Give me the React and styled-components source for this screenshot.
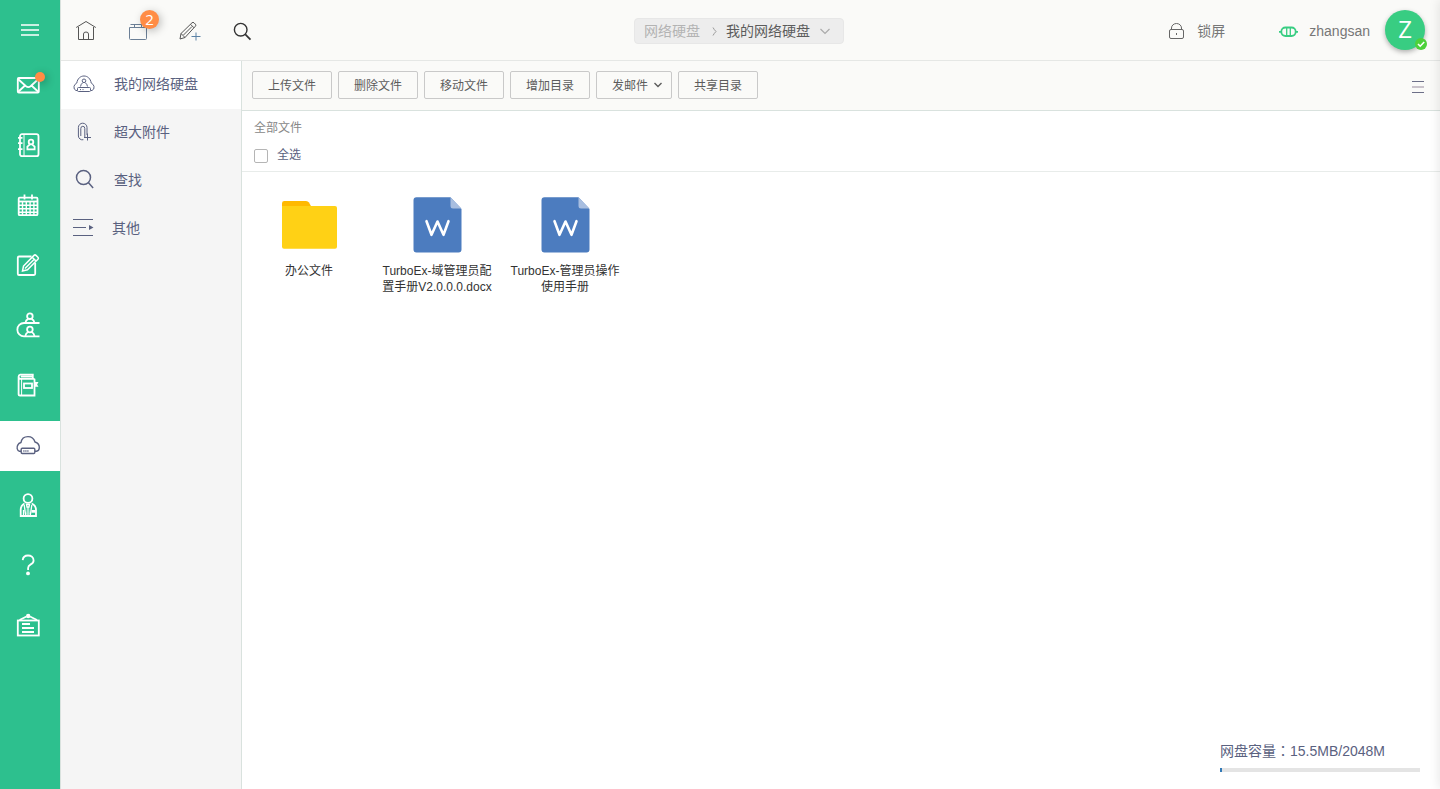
import React from 'react';
import styled, { createGlobalStyle, ThemeProvider } from 'styled-components';

const theme = {
  colors: {
    green: '#2dc08e',
    orange: '#ff8c45',
    bar: '#fafaf8',
    side: '#f5f5f5',
    line: '#d9e2de',
    ink: '#5a6180',
    text: '#5c5c5c',
  },
};

const GlobalStyle = createGlobalStyle`
  * {
    box-sizing: border-box;
  }

  body {
    margin: 0;
    overflow: hidden;
    background: #fff;
    color: #555;
    font-family: 'Liberation Sans', 'Noto Sans CJK SC', sans-serif;
    font-size: 14px;
  }

  button {
    font-family: inherit;
  }
`;

const Page = styled.div`
  display: flex;
  height: 789px;
  position: relative;
  overflow: hidden;
`;

const EdgeShadow = styled.div`
  position: absolute;
  top: 0;
  right: -10px;
  width: 10px;
  height: 100%;
  box-shadow: 0 0 12px rgba(0, 0, 0, 0.12);
  pointer-events: none;
`;

const Icon = styled.svg.attrs(props => ({
  viewBox: `0 0 ${props.$w || 24} ${props.$h || 24}`,
  width: props.$w || 24,
  height: props.$h || 24,
}))`
  display: block;
  flex: none;
  fill: none;
  overflow: visible;
  stroke: ${props => props.$color || 'currentColor'};
  stroke-width: ${props => props.$stroke || 1};

  .solid {
    fill: ${props => props.$color || 'currentColor'};
    stroke: none;
  }
`;

const Rail = styled.nav`
  width: 60px;
  flex: none;
  background: ${props => props.theme.colors.green};
  display: flex;
  flex-direction: column;
  gap: 10px;
`;

const RailToggle = styled.div`
  height: 51px;
  padding: 18px 0 0 18px;
  color: #fff;
`;

const RailItem = styled.div`
  position: relative;
  height: 50px;
  padding: 12px 0 0 16px;
  color: ${props => (props.$active ? props.theme.colors.ink : '#fff')};
  background: ${props => (props.$active ? '#fff' : 'transparent')};
`;

const Dot = styled.span`
  position: absolute;
  left: 35px;
  top: 11px;
  width: 10px;
  height: 10px;
  border-radius: 50%;
  background: ${props => props.theme.colors.orange};
  box-shadow: 2px 2px 8px rgba(0, 0, 0, 0.3);
`;

const Main = styled.div`
  flex: 1;
  min-width: 0;
  display: flex;
  flex-direction: column;
  border-left: 1px solid ${props => props.theme.colors.line};
`;

const Header = styled.header`
  height: 61px;
  flex: none;
  display: grid;
  grid-template-columns: 573px 210px 1fr;
  background: ${props => props.theme.colors.bar};
  border-bottom: 1px solid #e5e7e5;
`;

const HeaderTools = styled.div`
  display: flex;
  gap: 28px;
  padding: 19px 0 0 13px;
`;

const Tool = styled.span`
  position: relative;
  width: 24px;
  height: 24px;
  color: ${props => props.$color || '#555'};
`;

const Badge = styled.span`
  position: absolute;
  left: 14px;
  top: -9px;
  width: 19px;
  height: 19px;
  border-radius: 50%;
  background: ${props => props.theme.colors.orange};
  color: #fff;
  font: 400 15px/19px 'Open Sans', sans-serif;
  text-align: center;
  box-shadow: 2px 2px 8px rgba(0, 0, 0, 0.25);
`;

const Crumbs = styled.div`
  display: flex;
  align-items: center;
  height: 26px;
  margin-top: 18px;
  padding-left: 9px;
  border: 1px solid #e7e7e7;
  border-radius: 4px;
  background: #ededed;
  color: ${props => props.theme.colors.text};
  line-height: 24px;
  white-space: nowrap;

  .parent {
    width: 67px;
    color: #b3b3b3;
  }

  .current {
    width: 94px;
    padding-left: 1px;
  }
`;

const Account = styled.div`
  display: flex;
  justify-content: flex-end;
  padding: 10px 15px 0 0;
  line-height: 42px;
  color: #777;

  .lock {
    margin: 12px 12px 0 0;
  }

  .link {
    margin: 15px 11px 0 53px;
  }
`;

const Avatar = styled.div`
  position: relative;
  width: 40px;
  height: 40px;
  margin-left: 15px;
  border-radius: 50%;
  background: #38cd82;
  color: #fff;
  font: 400 24px/38px 'Open Sans', sans-serif;
  text-align: center;
  box-shadow: 0 2px 5px rgba(0, 0, 0, 0.3);
`;

const Status = styled.span`
  position: absolute;
  left: 30px;
  top: 28px;
  width: 12px;
  height: 12px;
  border-radius: 50%;
  background: #4dd13b;
`;

const Body = styled.div`
  flex: 1;
  display: flex;
`;

const Sidebar = styled.aside`
  width: 181px;
  flex: none;
  background: ${props => props.theme.colors.side};
  border-right: 1px solid ${props => props.theme.colors.line};
`;

const SideItem = styled.div`
  display: flex;
  align-items: center;
  gap: ${props => props.$gap || 18}px;
  height: 48px;
  padding: 0 0 2px 11px;
  color: ${props => props.theme.colors.ink};
  background: ${props => (props.$active ? '#fff' : 'transparent')};

  span {
    padding-bottom: 2px;
  }
`;

const Content = styled.main`
  flex: 1;
  display: flex;
  flex-direction: column;
`;

const Toolbar = styled.div`
  display: flex;
  gap: 6px;
  height: 50px;
  padding: 10px 15px 0 10px;
  background: ${props => props.theme.colors.bar};
  border-bottom: 1px solid ${props => props.theme.colors.line};
`;

const ToolButton = styled.button`
  display: flex;
  align-items: center;
  justify-content: center;
  gap: 5px;
  width: ${props => (props.$menu ? 76 : 80)}px;
  height: 28px;
  padding: ${props => (props.$menu ? '0 0 2px 7px' : '0 0 2px')};
  border: 1px solid #c9c9c9;
  border-radius: 2px;
  background: transparent;
  color: ${props => props.theme.colors.text};
  font-size: 12px;
`;

const ListToggle = styled.span`
  margin: 9px 0 0 auto;
  color: #6c6f88;
`;

const Path = styled.div`
  height: 61px;
  padding: 8px 0 0 12px;
  border-bottom: 1px solid #e8ecea;
  color: #888;
  font-size: 12px;
  line-height: 18px;
`;

const SelectAll = styled.label`
  display: flex;
  align-items: center;
  gap: 9px;
  margin-top: 9px;
  color: ${props => props.theme.colors.ink};

  span {
    width: 14px;
    height: 14px;
    margin-top: 2px;
    border: 1px solid #b5b5b5;
    border-radius: 2px;
    background: #fff;
  }
`;

const Files = styled.div`
  flex: 1;
  display: flex;
  gap: 8px;
  padding: 25px 0 0 7px;
`;

const File = styled.div`
  display: flex;
  flex-direction: column;
  align-items: center;
  width: 120px;
  color: #333;
  font-size: 12px;
  line-height: 16px;
  text-align: center;
  white-space: pre-line;
`;

const FileIcon = styled.div`
  height: 66px;
`;

const Quota = styled.footer`
  align-self: flex-end;
  width: 200px;
  margin: 0 20px 17px 0;
  color: ${props => props.theme.colors.ink};
  line-height: 20px;
`;

const Colon = styled.span`
  font-family: 'Noto Sans CJK TC', sans-serif;
  line-height: 1;
`;

const Meter = styled.div`
  height: 4px;
  margin-top: 7px;
  background: #e4e4e4;

  div {
    height: 100%;
    min-width: 2px;
    background: #337ab7;
  }
`;

const railIcons = [
  {
    name: 'mail',
    art: (
      <>
        <rect x="1.8" y="5" width="21" height="14.5" rx="1" />
        <path d="M2 6l8 7.2q2.3 1.8 4.6 0L22.5 6M2 19l6.5-6M22.5 19l-6.5-6" />
      </>
    ),
  },
  {
    name: 'contacts',
    art: (
      <>
        <rect x="4" y="1.2" width="18.5" height="22" rx="2" />
        <path d="M8 1v22" strokeWidth="1" />
        <path d="M2 4.8h4.5M2 10.2h4.5M2 16.2h4.5" />
        <circle cx="15" cy="9" r="2.3" />
        <path d="M14 11.3l-2.6 2.4v2.6h7.2v-2.6L16 11.3" />
      </>
    ),
  },
  {
    name: 'calendar',
    art: (
      <>
        <rect x="2.7" y="4.7" width="18.8" height="17.5" rx="1" />
        <path d="M2 8.5h20" />
        <path d="M2 12.2h20M2 15.7h20M2 19.2h20M6.5 8v14M10.3 8v14M14.1 8v14M17.9 8v14" strokeWidth="1.4" />
        <path d="M8.5 1.5v5M16 1.5v5" />
      </>
    ),
  },
  {
    name: 'compose',
    art: (
      <>
        <path d="M15.5 3.5H3Q1.8 3.5 1.8 4.7v16Q1.8 22 3 22h15q1.2 0 1.2-1.2V10" />
        <path d="M6.5 18l1-5L18 2.4q1-1 2 0l1.9 1.900q1 1 0 2L11.5 16.8 6.5 18zM16 4l4 4M9 15.5L18.5 6" strokeWidth="1.5" />
      </>
    ),
  },
  {
    name: 'groups',
    art: (
      <>
        <circle cx="13.9" cy="3.2" r="2.8" />
        <path d="M23.5 10H8a6.65 6.65 0 000 13.3h15.5" />
        <path d="M9.3 9.8q.5-3 3-4M18.5 9.8q-.5-3-3-4M9.3 23q.5-3 3-4M18.5 23q-.5-3-3-4" />
        <circle cx="13.9" cy="16.5" r="2.8" />
      </>
    ),
  },
  {
    name: 'notes',
    art: (
      <>
        <path d="M18.5 5.8H4.2q-1.6 0-1.6-2T4.2 1.6h12.6v4M2.6 3.5v18q0 1 1.4 1h14.5V5.8M4.8 3.6h11.5" />
        <path d="M5.6 6v16" strokeWidth="1" />
        <rect x="8" y="10.5" width="8" height="4.5" />
        <path className="solid" d="M18 9h4.5l-1.4 2.4 1.4 2.4H18z" />
      </>
    ),
  },
  {
    name: 'disk',
    active: true,
    art: (
      <>
        <path d="M5 18.3H3.5C1 17.5.3 14 2 11.8q.6-1.8 3-2.3C5.6 5.8 8.5 3.6 12 3.6s6 2.2 7 5.4c3 1 4.5 3.5 4.3 6q-.2 2.8-2.8 3.3H19" />
        <rect x="5.2" y="15.3" width="13.6" height="5.2" rx="1" />
        <path d="M7.3 18h1.2M9.3 18h1.2M11.3 18h1.2" />
      </>
    ),
  },
  {
    name: 'profile',
    art: (
      <>
        <circle cx="12" cy="5.5" r="4.4" />
        <path d="M8.5 10.5Q4.8 12.3 4.7 17v6H20v-6q-.1-4.7-4.3-6.5" />
        <path d="M8.2 12l1.6 11M15.8 12l-1.6 11M10.5 11.5h3l-.5 2.5h-2zM7.5 17v5.5" strokeWidth="1.3" />
        <path className="solid" d="M11 14h2l.8 7-1.8 2-1.8-2z" opacity="0.6" />
        <rect className="solid" x="15.5" y="17" width="4" height="2.7" />
      </>
    ),
  },
  {
    name: 'help',
    art: (
      <>
        <path d="M6.7 7.2C7 3.8 9 2.5 12 2.5s5.6 1.7 5.6 4.9c0 4.6-5.5 3.4-5.5 7.5v2" />
        <circle className="solid" cx="12" cy="20.4" r="1.9" />
      </>
    ),
  },
  {
    name: 'board',
    art: (
      <>
        <rect x="1.8" y="7.5" width="21" height="15" />
        <circle className="solid" cx="12.2" cy="3" r="2.2" />
        <path d="M3.5 7l7-3.5M21 7l-7-3.5M6 11h8M6 15h12M6 19h12" />
      </>
    ),
  },
];

const sideItems = [
  {
    label: '我的网络硬盘',
    active: true,
    art: (
      <>
        <path d="M5 18.5H4Q1.5 17.5 2 14.5q.2-2 2.8-3.500C5.5 6.5 8.5 4 12 4s6.5 2.5 7.2 7q2.6 1.5 2.8 3.5.5 3-2 4h-1" />
        <rect x="5.5" y="15.5" width="13" height="4" rx="1" />
        <circle cx="12" cy="8.8" r="1.8" />
        <path d="M8.5 14.5q.3-2.5 2.5-4M15.5 14.5q-.3-2.5-2.5-4M8 17.6h1M10.5 17.6h1" />
      </>
    ),
  },
  {
    label: '超大附件',
    art: (
      <>
        <path d="M15 15V7.5a4.3 4.3 0 00-8.600 0V16a4 4 0 005 3.700M8.800 16V8.500q0-2.200 2-2.200t2 2.200V17" />
        <path d="M15.500 13.500v7M12 17.500h7" />
      </>
    ),
  },
  {
    label: '查找',
    stroke: 1.5,
    art: (
      <>
        <circle cx="11.500" cy="9.500" r="7" />
        <path d="M16.300 14.600l4.800 5.400" />
      </>
    ),
  },
  {
    label: '其他',
    gap: 16,
    art: (
      <>
        <path d="M1 3.500h20M1 11.500h13M1 19.500h20" />
        <path className="solid" d="M17 9l4.500 2.500L17 14z" />
      </>
    ),
  },
];

const toolButtons = [
  { label: '上传文件' },
  { label: '删除文件' },
  { label: '移动文件' },
  { label: '增加目录' },
  { label: '发邮件', menu: true },
  { label: '共享目录' },
];

const files = [
  { name: '办公文件', type: 'folder' },
  { name: 'TurboEx-域管理员配\n置手册V2.0.0.0.docx', type: 'word' },
  { name: 'TurboEx-管理员操作\n使用手册', type: 'word' },
];

const FolderIcon = () => (
  <Icon $w={56} $h={56}>
    <g stroke="none">
      <path fill="#ffb900" d="M1 12V6.300Q1 4 3.300 4H25q2 0 3 1.500L31 11z" />
      <path fill="#ffd115" d="M1 9h53q2 0 2 2v38.700q0 2-2 2H3q-2 0-2-2z" />
    </g>
  </Icon>
);

const WordIcon = () => (
  <Icon $w={48} $h={56}>
    <path stroke="none" fill="#4c7cbf" d="M3.500 .3h34L48.500 12v40.500q0 3-3 3h-42q-3 0-3-3V3.300q0-3 3-3z" />
    <path stroke="none" fill="#a8bee0" d="M37.500 .3L48.500 11.500H40q-2.500 0-2.500-2.500z" />
    <path
      d="M13.500 24.200l5 13.600L24.500 24.500l6 13.300 5-13.600"
      stroke="#fff"
      strokeWidth="2.600"
      strokeLinecap="round"
      strokeLinejoin="round"
    />
  </Icon>
);

const DiskQuota = ({ used, total }) => (
  <Quota>
    网盘容量<Colon lang="zh-TW">：</Colon>
    {used}MB/{total}M
    <Meter>
      <div style={{ width: `${(used / total) * 100}%` }} />
    </Meter>
  </Quota>
);

const App = () => (
  <ThemeProvider theme={theme}>
    <GlobalStyle />
    <Page>
      <Rail>
        <RailToggle>
          <Icon $stroke={1.7}>
            <path d="M3 7h18M3 12h18M3 17h18" />
          </Icon>
        </RailToggle>
        {railIcons.map(item => (
          <RailItem key={item.name} $active={item.active}>
            <Icon $stroke={item.active ? 1.4 : 1.8}>{item.art}</Icon>
            {item.name === 'mail' && <Dot />}
          </RailItem>
        ))}
      </Rail>

      <Main>
        <Header>
          <HeaderTools>
            <Tool>
              <Icon>
                <path d="M2.200 8.500L12 2.500l9.800 6M4.500 8v12.500h15V8" />
                <path d="M9.500 20.500V15q0-2 2.500-2t2.500 2v5.500" />
              </Icon>
            </Tool>
            <Tool $color="#6b7f96">
              <Icon>
                <path d="M3.500 8.500v11q0 1 1 1h15q1 0 1-1v-11z" />
                <path d="M4.500 5.500h15M8.500 5.500v3M15.500 5.500v3" />
              </Icon>
              <Badge>2</Badge>
            </Tool>
            <Tool>
              <Icon>
                <path d="M2 20l1-5.500L14 3.800q1-1 2 0l1.400 1.400q1 1 0 2L7 18.500 2 20zM12.500 5.300l3.500 3.500M3 14.500l4 4M5.500 16l8.500-8.500" />
                <path d="M18 13.500v8M13.500 17.500h9" stroke="#5c83a6" />
              </Icon>
            </Tool>
            <Tool $color="#333">
              <Icon $stroke={1.4}>
                <circle cx="10.700" cy="10.700" r="6.300" />
                <path d="M15.300 15.300l5.200 5.400" strokeWidth="1.700" />
              </Icon>
            </Tool>
          </HeaderTools>

          <Crumbs>
            <span className="parent">网络硬盘</span>
            <Icon $w={14} $h={12} $color="#999">
              <path d="M2 2.500q1 2 3 4-2 2-3 4" />
            </Icon>
            <span className="current">我的网络硬盘</span>
            <Icon $w={12} $h={10} $color="#aaa">
              <path d="M1.500 3L6 7.500 10.500 3" strokeWidth="1.200" />
            </Icon>
          </Crumbs>

          <Account>
            <Icon className="lock" $w={17} $h={18} $color="#666">
              <rect x="1.500" y="7.500" width="14" height="9" rx="1.500" />
              <path d="M3.500 7.500V6a5 4.500 0 0110 0v1.500M8.500 11v2" />
            </Icon>
            锁屏
            <Icon className="link" $w={20} $h={14} $color="#38cd82" $stroke={1.8}>
              <rect x="3.300" y="2.500" width="14.400" height="8.500" rx="4.200" />
              <path d="M8.700 2.500v8.500M12.300 2.500v8.500" strokeWidth="1.300" />
              <path d="M1 6.800h2.500M17.500 6.800h2.500" />
            </Icon>
            zhangsan
            <Avatar>
              Z
              <Status>
                <Icon $w={12} $h={12} $color="#fff" $stroke={1.6}>
                  <path d="M3 6l2.200 2.200L9.200 4" />
                </Icon>
              </Status>
            </Avatar>
          </Account>
        </Header>

        <Body>
          <Sidebar>
            {sideItems.map(item => (
              <SideItem key={item.label} $active={item.active} $gap={item.gap}>
                <Icon $stroke={item.stroke}>{item.art}</Icon>
                <span>{item.label}</span>
              </SideItem>
            ))}
          </Sidebar>

          <Content>
            <Toolbar>
              {toolButtons.map(button => (
                <ToolButton key={button.label} $menu={button.menu}>
                  {button.label}
                  {button.menu && (
                    <Icon $w={10} $h={8} $stroke={1.4}>
                      <path d="M1.500 3L5 6.500 8.500 3" />
                    </Icon>
                  )}
                </ToolButton>
              ))}
              <ListToggle>
                <Icon $w={13} $h={16}>
                  <path d="M0 1.500h12M0 12.500h12" />
                  <path d="M0 7h12" strokeWidth="2" stroke="#c9c3cb" />
                </Icon>
              </ListToggle>
            </Toolbar>
            <Path>
              全部文件
              <SelectAll>
                <span />
                全选
              </SelectAll>
            </Path>
            <Files>
              {files.map(file => (
                <File key={file.name}>
                  <FileIcon>{file.type === 'folder' ? <FolderIcon /> : <WordIcon />}</FileIcon>
                  {file.name}
                </File>
              ))}
            </Files>
            <DiskQuota used={15.5} total={2048} />
          </Content>
        </Body>
      </Main>
      <EdgeShadow />
    </Page>
  </ThemeProvider>
);

export default App;
